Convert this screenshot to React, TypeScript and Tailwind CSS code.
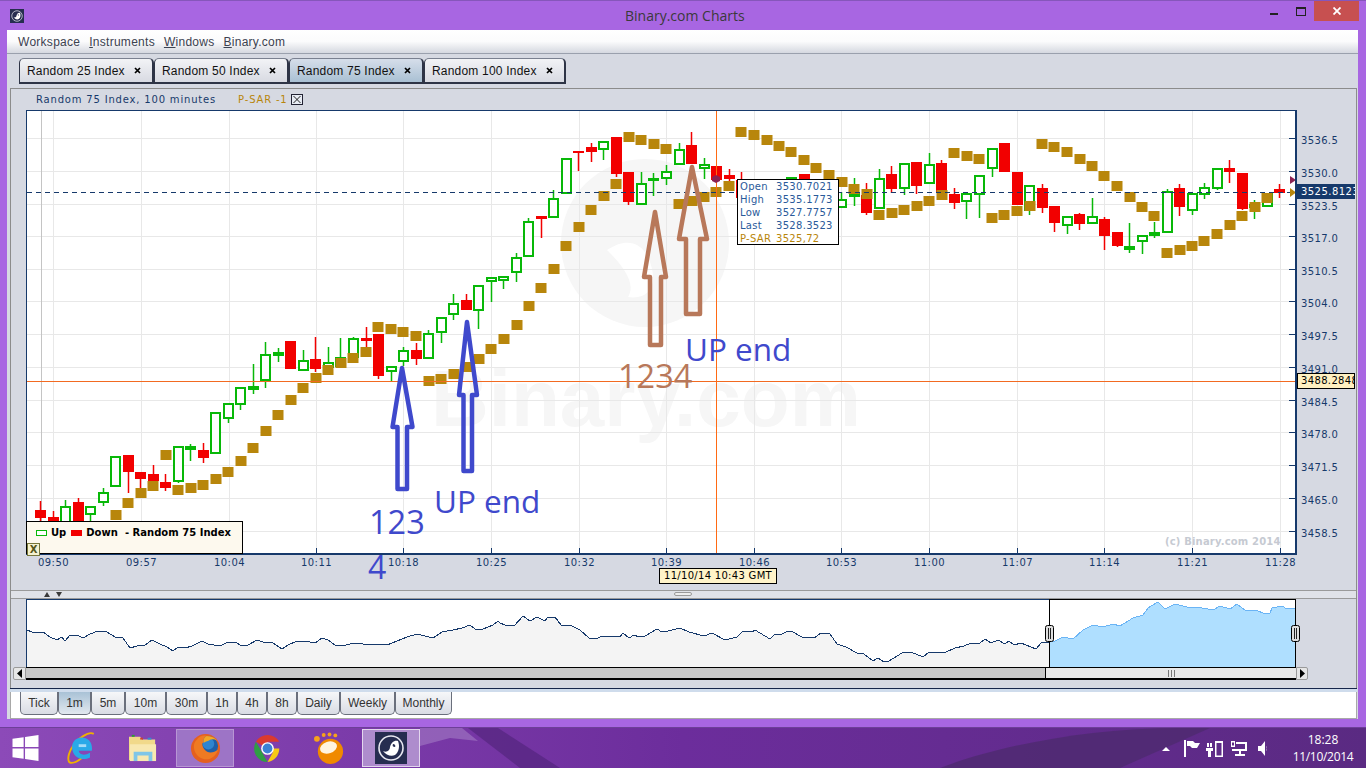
import React from 'react';

const sans = { fontFamily: '"Liberation Sans", Arial, sans-serif' };

// candle rows: type, body top, body bottom, wick top, wick bottom (page pixels)
type Candle = [string, number, number, number?, number?] | null;
const candles: Candle[] = [
  ['d', 510, 518, 501, 521], ['d', 517, 525, 511, 525], ['u', 506, 525, 500, 525], ['d', 502, 525, 498, 525],
  ['u', 506, 515, 506, 521], ['u', 492, 503, 488, 506], ['u', 456, 487], ['d', 455, 472, 455, 493],
  ['d', 472, 479, 472, 488], ['d', 474, 481, 465, 490], ['d', 482, 488, 474, 491], ['u', 446, 482, 446, 483],
  ['f', 446, 450, 444, 461], ['d', 450, 458, 443, 463], ['u', 412, 454], ['u', 403, 419, 403, 423],
  ['u', 387, 405, 387, 410], ['u', 386, 390, 364, 394], ['u', 354, 381, 342, 388], ['f', 352, 356, 348, 362],
  ['d', 341, 369], ['u', 360, 371, 350, 371], ['d', 359, 369, 337, 372], ['u', 362, 368, 347, 368],
  ['u', 357, 367, 338, 367], ['u', 338, 358, 337, 358], ['d', 338, 341, 327, 347], ['d', 334, 376, 334, 379],
  ['u', 366, 372, 366, 381], ['u', 350, 362, 347, 366], ['d', 350, 359, 343, 365], ['u', 333, 359, 330, 359],
  ['u', 317, 333, 317, 343], ['u', 303, 315, 294, 320], ['d', 300, 310, 294, 310], ['u', 285, 311, 285, 329],
  ['u', 277, 282, 277, 302], ['u', 276, 281, 276, 289], ['u', 257, 273, 253, 282], ['u', 221, 257, 218, 257],
  ['d', 216, 219, 216, 238], ['u', 198, 218, 190, 218], ['u', 158, 194], ['d', 151, 153, 151, 171],
  ['d', 147, 152, 143, 162], ['u', 141, 150, 141, 160], ['d', 137, 174, 137, 177], ['d', 172, 202, 172, 205],
  ['u', 183, 205, 172, 205], ['u', 178, 181, 173, 196], ['u', 171, 179, 165, 185], ['u', 149, 165, 143, 165],
  ['d', 145, 164, 132, 164], ['u', 164, 169, 158, 179], ['d', 166, 180], ['d', 175, 179, 169, 190],
  ['d', 180, 198, 172, 198], null, null, null, ['u', 177, 190], ['d', 174, 190], null, null,
  ['u', 199, 208, 192, 208], ['f', 193, 197, 178, 206], ['d', 195, 213, 183, 215], ['u', 178, 209, 169, 209],
  ['d', 174, 189, 166, 193], ['u', 163, 189, 163, 195], ['d', 162, 186, 162, 194], ['u', 164, 184, 153, 184],
  ['d', 163, 192, 160, 192], ['d', 194, 203, 188, 209], ['u', 193, 202, 193, 219], ['u', 175, 195, 175, 218],
  ['u', 148, 169, 148, 177], ['d', 143, 172], ['d', 172, 205], ['u', 185, 211, 185, 215],
  ['d', 188, 208, 184, 213], ['d', 206, 223, 206, 232], ['u', 216, 226, 216, 234], ['d', 214, 224, 213, 230],
  ['u', 216, 224, 198, 224], ['d', 219, 236, 217, 250], ['d', 232, 246, 232, 247], ['f', 246, 250, 223, 253],
  ['u', 235, 242, 235, 254], ['f', 232, 236, 222, 238], ['u', 191, 233, 189, 233], ['d', 188, 207, 184, 216],
  ['u', 193, 211, 193, 215], ['u', 187, 195, 183, 199], ['u', 168, 189, 168, 190], ['d', 168, 172, 160, 183],
  ['d', 173, 209, 173, 210], ['f', 204, 208, 200, 219], ['u', 193, 207], ['d', 189, 193, 184, 198],
];

const sar = [
  [116, 515], [128, 503], [141, 493], [153, 486], [166, 455], [178, 490], [191, 488], [203, 485], [216, 479], [228, 472],
  [241, 461], [253, 448], [266, 431], [278, 415], [291, 400], [303, 388], [316, 378], [328, 370], [341, 363], [353, 358],
  [366, 352], [378, 327], [391, 329], [403, 332], [416, 336], [429, 381], [441, 379], [454, 374], [467, 367], [479, 359],
  [491, 349], [504, 339], [517, 325], [529, 306], [541, 288], [554, 269], [566, 246], [579, 227], [591, 210], [604, 196],
  [616, 184], [629, 137], [641, 140], [654, 144], [666, 149], [679, 204], [692, 201], [704, 197], [716, 192], [729, 186],
  [741, 132], [754, 135], [767, 140], [779, 146], [791, 152], [804, 160], [816, 168], [829, 175], [842, 182], [854, 189],
  [867, 194], [879, 215], [892, 213], [904, 210], [917, 206], [929, 201], [942, 195], [954, 153], [967, 156], [979, 159],
  [992, 218], [1004, 215], [1017, 211], [1030, 206], [1042, 144], [1054, 147], [1067, 152], [1080, 159], [1092, 166],
  [1104, 176], [1117, 186], [1130, 197], [1142, 207], [1154, 216], [1167, 253], [1180, 250], [1192, 246], [1204, 241],
  [1217, 234], [1230, 225], [1242, 216], [1255, 207], [1267, 198],
];

const gridY = [138, 171, 204, 236, 269, 301, 334, 367, 400, 432, 465, 498, 531];
const priceLabels = ['3536.5', '3530.0', '3523.5', '3517.0', '3510.5', '3504.0', '3497.5', '3491.0', '3484.5', '3478.0', '3471.5', '3465.0', '3458.5'];
const times: [number, string][] = [
  [53, '09:50'], [141, '09:57'], [229, '10:04'], [316, '10:11'], [403, '10:18'], [491, '10:25'], [579, '10:32'], [666, '10:39'],
  [754, '10:46'], [841, '10:53'], [929, '11:00'], [1017, '11:07'], [1104, '11:14'], [1192, '11:21'], [1280, '11:28'],
];

const CandleMark = ({ c, i }: { c: NonNullable<Candle>; i: number }) => {
  const left = Math.round(40.5 + 12.52 * i - 5.5);
  const [type, top, bottom, wickTop = top, wickBottom = bottom] = c;
  const color = type === 'd' ? '#f20000' : '#08b808';
  return (
    <g>
      <rect x={left + 4.75} y={wickTop} width={1.5} height={wickBottom - wickTop} fill={color} />
      {type === 'u' ? (
        <rect x={left + 1} y={top + 1} width={9} height={bottom - top - 2} fill="#fff" stroke={color} strokeWidth={2} />
      ) : (
        <rect x={left} y={top} width={11} height={bottom - top} fill={color} />
      )}
    </g>
  );
};

const arrowPath = (tip: number[], headY: number, l: number, r: number, sl: number, sr: number, bottom: number) =>
  `M${tip[0]} ${tip[1]} L${r} ${headY} L${sr} ${headY} L${sr} ${bottom} L${sl} ${bottom} L${sl} ${headY} L${l} ${headY} Z`;

const ChartArea = () => (
  <svg viewBox="11 110 1345 480" className="block h-[480px] w-[1345px]" style={{ fontFamily: '"DejaVu Sans", sans-serif' }}>
    <rect x={26} y={110} width={1270} height={444} fill="#fff" />
    <circle cx={645} cy={243} r={84} fill="#f6f6f6" />
    <path d="M607 250C625 238 642 240 650 262C658 285 650 300 628 297C636 284 625 268 607 250Z" fill="#fff" />
    <text x={431} y={426} fontSize={80} fontWeight={700} fill="#f6f6f6" style={sans}>Binary.com</text>
    {gridY.map((y) => (
      <g key={y}>
        <rect x={27} y={y} width={1268} height={1} fill="#e8e8e8" />
        <rect x={1289} y={y} width={6} height={1} fill="#16396b" />
      </g>
    ))}
    {times.map(([x, t]) => (
      <g key={t}>
        <rect x={x} y={111} width={1} height={442} fill="#e8e8e8" />
        <rect x={x} y={548} width={1} height={5} fill="#16396b" />
        <text x={x + 0.5} y={566} textAnchor="middle" fontSize={10} letterSpacing={0.45} fill="#16396b">{t}</text>
      </g>
    ))}
    <rect x={41} y={111} width={1} height={442} fill="#c4c4c4" />
    <text x={1165} y={545} fontSize={10} fontWeight={700} letterSpacing={0.17} fill="#c6cad2">(c) Binary.com 2014</text>
    {candles.map((c, i) => c && <CandleMark key={i} c={c} i={i} />)}
    {sar.map(([x, y]) => (
      <rect key={x} x={x - 5.5} y={y - 5} width={11} height={10} fill="#b8860b" />
    ))}
    <line x1={27} x2={1295} y1={192.5} y2={192.5} stroke="#16396b" strokeWidth={1} strokeDasharray="5 4" />
    <rect x={27} y={381} width={1268} height={1} fill="#f26a21" />
    <rect x={716} y={111} width={1} height={442} fill="#ff6a13" />
    <polygon points="716,175 720,177 720,181 716,183 712,181 712,177" fill="#8b2252" />
    <polygon points="1290,176 1296,180 1290,184" fill="#8b2252" />
    <polygon points="1290,188 1296,192.5 1290,197" fill="#b8860b" />
    <rect x={26} y={110} width={1270} height={1} fill="#16396b" />
    <rect x={26} y={110} width={1} height={444} fill="#16396b" />
    <rect x={1295} y={110} width={2} height={445} fill="#16396b" />
    <rect x={26} y={553} width={1271} height={2} fill="#16396b" />
    {priceLabels.map((p, i) => (
      <text key={p} x={1301} y={gridY[i] + 6} fontSize={10} letterSpacing={0.35} fill="#16396b">{p}</text>
    ))}
    <path d={arrowPath([402, 368], 427, 392.5, 412.5, 397.5, 407, 489)} fill="none" stroke="#3f49cc" strokeWidth={4.5} strokeLinejoin="round" />
    <path d={arrowPath([467, 322], 395, 459, 477, 463.5, 472, 471)} fill="none" stroke="#3f49cc" strokeWidth={4.5} strokeLinejoin="round" />
    <path d={arrowPath([655, 212], 277, 644, 666, 650, 661, 345)} fill="none" stroke="#b8785a" strokeWidth={4.5} strokeLinejoin="round" />
    <path d={arrowPath([692, 167], 239, 679, 707, 686, 700, 314)} fill="none" stroke="#b8785a" strokeWidth={4.5} strokeLinejoin="round" />
  </svg>
);

const navLine = [
  [27, 630], [32, 632], [37, 633], [43, 632], [50, 637], [57, 640], [62, 637], [65, 641], [70, 635], [77, 635], [83, 638], [90, 634], [98, 631], [107, 632],
  [115, 637], [123, 638], [130, 648], [137, 646], [145, 645], [152, 640], [160, 644], [167, 647], [173, 651], [178, 647], [185, 648], [192, 646], [202, 641],
  [208, 644], [220, 646], [228, 642], [235, 642], [242, 646], [248, 645], [257, 640], [263, 642], [273, 643], [282, 649], [288, 645], [297, 641], [305, 641],
  [315, 643], [322, 638], [328, 640], [335, 645], [343, 646], [353, 643], [363, 644], [373, 644], [387, 645], [397, 641], [407, 637], [417, 634], [425, 636],
  [433, 638], [442, 632], [453, 630], [462, 628], [470, 625], [475, 629], [483, 629], [493, 625], [498, 621],
  [500, 623], [505, 625], [514, 626], [523, 616], [530, 621], [537, 617], [545, 621], [548, 617], [555, 617], [561, 625], [570, 625], [580, 630], [589, 638],
  [596, 639], [602, 636], [607, 637], [614, 636], [620, 637], [623, 633], [629, 638], [634, 635], [639, 637], [645, 636], [657, 629], [662, 632], [668, 631],
  [680, 628], [689, 632], [704, 636], [712, 633], [725, 640], [737, 637], [743, 631], [752, 632], [755, 630], [770, 639], [775, 634], [782, 634], [786, 632],
  [791, 631], [802, 637], [814, 638], [821, 633], [830, 634], [837, 644], [846, 647], [857, 653], [864, 654], [873, 661], [878, 658], [884, 662], [889, 661],
  [902, 653], [911, 652], [923, 657], [929, 652], [937, 652], [946, 652], [955, 648], [964, 646], [971, 643], [980, 643], [985, 639], [991, 643], [998, 640],
  [1005, 644], [1009, 641], [1014, 645], [1021, 643], [1036, 649], [1041, 643], [1049, 642],
];
const navBlue = [
  [1049, 641], [1055, 641], [1063, 637], [1073, 639], [1083, 630], [1093, 625], [1103, 627], [1113, 624], [1120, 626], [1133, 618], [1143, 615], [1148, 608],
  [1158, 602], [1165, 609], [1175, 604], [1187, 607], [1197, 607], [1213, 610], [1220, 606], [1230, 609], [1237, 604], [1245, 610], [1258, 611], [1263, 613],
  [1270, 613], [1272, 608], [1282, 606], [1287, 609], [1296, 608],
];
const toPoints = (pts: number[][]) => pts.map((p) => p.join(',')).join(' ');

const NavHandle = ({ x }: { x: number }) => (
  <g>
    <rect x={x - 4} y={625.5} width={8} height={16} rx={2} fill="#dedede" stroke="#000" />
    <path d={`M${x - 1} 628V639M${x + 1} 628V639`} stroke="#222" strokeWidth={1} />
  </g>
);

const Overview = () => (
  <svg viewBox="26 599 1270 68" className="block h-[68px] w-[1270px] overflow-visible">
    <rect x={26} y={599} width={1270} height={68} fill="#fff" />
    <polygon points={`27,667 ${toPoints(navLine)} 1049,667`} fill="#f4f4f4" />
    <polyline points={toPoints(navLine)} fill="none" stroke="#16396b" strokeWidth={1} shapeRendering="crispEdges" />
    <polygon points={`1049,667 ${toPoints(navBlue)} 1296,667`} fill="#afdfff" />
    <polyline points={toPoints(navBlue)} fill="none" stroke="#6ab4f5" strokeWidth={1} shapeRendering="crispEdges" />
    <rect x={26} y={599} width={1023} height={1} fill="#16396b" />
    <rect x={26} y={599} width={1} height={68} fill="#16396b" />
    <rect x={1049.5} y={599.5} width={246} height={68} fill="none" stroke="#000" />
    <NavHandle x={1049.5} />
    <NavHandle x={1295.5} />
  </svg>
);

const tabs = ['Random 25 Index', 'Random 50 Index', 'Random 75 Index', 'Random 100 Index'];
const ranges: [string, string][] = [
  ['Tick', 'w-[38px]'], ['1m', 'w-[33px]'], ['5m', 'w-[34px]'], ['10m', 'w-[41px]'], ['30m', 'w-[41px]'], ['1h', 'w-[30px]'],
  ['4h', 'w-[30px]'], ['8h', 'w-[30px]'], ['Daily', 'w-[43px]'], ['Weekly', 'w-[55px]'], ['Monthly', 'w-[57px]'],
];

const BinaryMark = ({ className }: { className: string }) => (
  <svg viewBox="0 0 32 32" className={className}>
    <rect width={32} height={32} fill="#262d50" />
    <circle cx={16} cy={16} r={12} fill="none" stroke="#e8e8f0" strokeWidth={1.6} />
    <path d="M8 19C12 21 15 18 15 15C16 11 19 8 23 9C25 14 24 20 20 23C16 25 11 23 8 19Z" fill="#fff" />
    <path d="M18 12C20 12 21 14 20 15C18 15 17 14 18 12Z" fill="#262d50" />
  </svg>
);

const Taskbar = () => (
  <div className="relative flex h-[41px] items-center overflow-hidden border-t border-[#6d3f98] bg-gradient-to-r from-[#8c4ab8] via-[#6c2d9c] to-[#5a2a82]">
    <svg viewBox="0 728 1366 40" className="absolute inset-0 h-full w-full">
      <path d="M420 728H462L478 741L450 738L420 746Z" fill="#a37cc4" opacity={0.6} />
      <path d="M468 728H498L560 768H520Z" fill="#4f2378" opacity={0.6} />
      <path d="M940 768C1000 745 1090 728 1180 728H1210L1120 768Z" fill="#4e2a6f" opacity={0.8} />
    </svg>
    <div className="relative flex h-full items-center">
      <div className="flex w-[50px] justify-center">
        <svg viewBox="0 0 28 28" className="h-[26px] w-[27px]" fill="#fff">
          <path d="M0 4L12 2.4V13H0ZM13.5 2.2L28 0V13H13.5ZM0 14.5H12V25.6L0 24ZM13.5 14.5H28V28L13.5 25.8Z" />
        </svg>
      </div>
      <div className="flex w-[62px] justify-center">
        <svg viewBox="0 0 32 34" className="h-[32px] w-[31px]">
          <path d="M29 2C24 -1 12 6 5 18C2 24 1 29 3 32C6 34 12 31 17 27" fill="none" stroke="#f0b000" strokeWidth={2} />
          <path d="M6 16C6 9 12 5 18 6C25 7 28 13 27 20H13C14 25 20 25 25 22V27C17 31 6 28 6 16Z" fill="#29a9e8" />
          <rect x={13} y={13} width={8} height={3} fill="#a4dcf8" />
        </svg>
      </div>
      <div className="flex w-[62px] justify-center">
        <svg viewBox="0 0 32 30" className="h-[28px] w-[32px]">
          <path d="M1 3H13L15 6H29V28H1Z" fill="#f1d98a" />
          <rect x={4} y={1} width={3} height={2} fill="#2ca02c" />
          <rect x={13} y={4} width={3} height={2} fill="#d04030" />
          <rect x={21} y={4} width={4} height={2} fill="#3090d0" />
          <path d="M2 11H30V29H2Z" fill="#f8e8b0" />
          <path d="M6 29V19H26V29H22V23H10V29Z" fill="#7fc6e8" />
        </svg>
      </div>
      <div className="ml-[2px] flex h-[38px] w-[58px] items-center justify-center border border-[#b896d4] bg-[#9d74c6]">
        <svg viewBox="0 0 32 32" className="h-[31px] w-[31px]">
          <circle cx={16} cy={16} r={15} fill="#e4601f" />
          <circle cx={18.500} cy={13.500} r={10.500} fill="#1f5fa8" />
          <circle cx={19} cy={11} r={6} fill="#2f85cf" />
          <path d="M7 7C10 3 14 2 17 3C14 5 13 8 15 10C12 9 12 13 15 17C18 21 24 21 29 17C27 24 21 28 15 27C8 26 4 20 4 14C4 11 5 9 7 7Z" fill="#ef7a22" />
          <path d="M17 3C22 3 26 5 28 8C25 6 22 6 19 8C17 9 15 9 15 10C13 8 14 5 17 3Z" fill="#f4a724" />
        </svg>
      </div>
      <div className="flex w-[66px] justify-center">
        <svg viewBox="0 0 32 32" className="h-[29px] w-[29px]">
          <path d="M16 16L3.2 8.5A15 15 0 0 1 29 8.5H16Z" fill="#db3a2f" />
          <path d="M16 16H29A15 15 0 0 1 16 31L22 20Z" fill="#f6c913" />
          <path d="M16 31A15 15 0 0 1 3.2 8.5L10 20Z" fill="#2f9e44" />
          <circle cx={16} cy={16} r={7} fill="#fff" />
          <circle cx={16} cy={16} r={5.4} fill="#3b82d6" />
        </svg>
      </div>
      <div className="flex w-[58px] justify-center">
        <svg viewBox="0 0 32 34" className="h-[33px] w-[31px]">
          <circle cx={17} cy={20} r={13} fill="#f08a00" />
          <ellipse cx={15} cy={16} rx={9} ry={6} fill="#fff4e0" transform="rotate(-18 15 16)" />
          <circle cx={3} cy={7} r={3} fill="#f7a21b" />
          <circle cx={10} cy={3} r={2} fill="#f7a21b" />
          <circle cx={16} cy={2.5} r={2} fill="#f7a21b" />
          <circle cx={22} cy={3.5} r={2} fill="#f7a21b" />
        </svg>
      </div>
      <div className="ml-[4px] flex h-[38px] w-[58px] items-center justify-center border border-[#e3d6ee] bg-[#ae8ccd]">
        <BinaryMark className="h-[32px] w-[32px]" />
      </div>
    </div>
    <div className="relative ml-auto flex h-full items-center text-white">
      <svg viewBox="0 0 110 20" className="mr-[23px] h-[20px] w-[110px]" fill="#fff">
        <polygon points="5,13 13,13 9,9" />
        <path d="M27 2H29V19H27ZM30 3H36L38 5H43L40 10H35L33 8H30Z" />
        <path d="M52 5V9H50V5ZM55 5V9H53V5ZM49 10H56V13H54V19H51V13H49ZM58 3H66V19H58ZM59.500 5V17.500H64.500V5Z" />
        <path d="M74 3H78V9H74ZM75 4.500V7.500H77V4.500ZM79 4H90V13H84V16H88V18H78V16H82V13H75V11H88V6H79Z" />
        <path d="M101 8H104L108 3V18L104 13H101ZM110 8C111.500 10 111.500 11 110 13L109.500 12C110 11 110 10 109.500 9Z" />
      </svg>
      <div className="w-[76px] pr-[10px] text-center text-[12px] leading-[17px]" style={{ fontFamily: '"Open Sans", sans-serif' }}>
        <p>18:28</p>
        <p className="tracking-[-0.3px]">11/10/2014</p>
      </div>
    </div>
  </div>
);

const Note = ({ className, children }: { className: string; children: React.ReactNode }) => (
  <span className={`absolute leading-none whitespace-nowrap ${className}`} style={{ fontFamily: '"Open Sans", sans-serif' }}>{children}</span>
);

const tipRows = [['Open', '3530.7021'], ['High', '3535.1773'], ['Low', '3527.7757'], ['Last', '3528.3523']];

export default function App() {
  return (
    <div className="relative flex h-[768px] w-[1366px] flex-col overflow-hidden bg-[#a866e2]" style={sans}>
      {/* title bar */}
      <div className="relative flex h-[30px] shrink-0 items-center border-t border-[#8656bb]">
        <BinaryMark className="ml-[10px] h-[14px] w-[14px]" />
        <span className="absolute left-[625px] top-[6px] text-[14px] leading-[18px] text-[#3a3a3a]" style={{ fontFamily: '"Open Sans", sans-serif' }}>Binary.com Charts</span>
        <div className="absolute right-[7px] top-0 flex items-start">
          <div className="mt-[12px] mr-[18px] h-[2px] w-[8px] bg-[#222]" />
          <div className="mt-[6px] mr-[8px] h-[9px] w-[10px] border border-t-[2px] border-[#222]" />
          <div className="flex h-[20px] w-[45px] items-center justify-center bg-[#c75050]">
            <svg viewBox="0 0 8 8" className="h-[8px] w-[8px]">
              <path d="M0.500 0.500L7.500 7.500M7.500 0.500L0.500 7.500" stroke="#fff" strokeWidth={1.8} />
            </svg>
          </div>
        </div>
      </div>

      {/* app window */}
      <div className="ml-[7px] flex h-[689px] w-[1351px] shrink-0 flex-col bg-[#d6d9e2]">
        <div className="flex h-[24px] shrink-0 items-center gap-[9px] border-b border-[#9aa0ad] bg-gradient-to-b from-white via-[#fbfbfc] to-[#d5d8e0] pl-[11px] text-[12px] tracking-[0.27px] text-[#3c4250]">
          <span>Workspace</span>
          <span><u>I</u>nstruments</span>
          <span><u>W</u>indows</span>
          <span><u>B</u>inary.com</span>
        </div>

        <div className="flex h-[34px] shrink-0 pl-[12px] pt-[4px]">
          {tabs.map((t) => (
            <div
              key={t}
              className={`flex h-[26px] items-center rounded-t-[5px] border border-b-2 border-r-2 border-[#2e3446] border-t-[#7a8090] pl-[7px] text-[12px] tracking-[0.2px] text-[#111] ${t === 'Random 100 Index' ? 'w-[142px]' : 'w-[135px]'} ${t === 'Random 75 Index' ? 'bg-gradient-to-b from-[#d6deea] to-[#a9c0d3]' : 'bg-gradient-to-b from-[#f2f3f6] to-[#d8dae2]'}`}
            >
              <span>{t}</span>
              <svg viewBox="0 0 7 7" className="ml-[9px] h-[7px] w-[7px]">
                <path d="M1 1L6 6M6 1L1 6" stroke="#000" strokeWidth={1.7} />
              </svg>
            </div>
          ))}
        </div>

        <div className="ml-[3px] flex h-[600px] w-[1347px] shrink-0 flex-col border-x border-t border-[#8c8c8c]" >
          <div className="flex h-[21px] shrink-0 items-center pl-[25px] text-[10px] tracking-[0.82px] text-[#16396b]" style={{ fontFamily: '"DejaVu Sans", sans-serif' }}>
            <span>Random 75 Index, 100 minutes</span>
            <span className="ml-[22px] text-[#b8860b]">P-SAR -1</span>
            <svg viewBox="0 0 12 11" className="ml-[3px] h-[11px] w-[12px]">
              <rect x={0.5} y={0.5} width={11} height={10} fill="#e8ecf4" stroke="#223" />
              <path d="M2.500 2L9.500 9M9.500 2L2.500 9" stroke="#222" strokeWidth={1} />
            </svg>
          </div>
          <ChartArea />
          <div className="relative h-[9px] shrink-0 border-y border-[#9a9a9a] bg-[#e0e2e8]">
            <svg viewBox="0 0 20 5" className="absolute left-[33px] top-[1px] h-[5px] w-[20px]" fill="#3a3a3a">
              <polygon points="0,5 6,5 3,0" />
              <polygon points="12,0 18,0 15,5" />
            </svg>
            <div className="absolute left-[663px] top-[1px] h-[4px] w-[18px] rounded-[2px] border border-[#9a9a9a] bg-[#eee]" />
          </div>
          <div className="ml-[15px] shrink-0"><Overview /></div>
          <div className="ml-[2px] flex h-[13px] shrink-0">
            <div className="flex w-[13px] items-center justify-center rounded-l-[2px] border border-[#9a9a9a] bg-[#e6e6e6]">
              <svg viewBox="0 0 5 9" className="h-[9px] w-[5px]"><polygon points="5,0 5,9 0,4.500" fill="#000" /></svg>
            </div>
            <div className="flex w-[1270px] border-y border-black border-b-2">
              <div className="w-[1019px] bg-[#c8c8c8]" />
              <div className="flex w-[251px] items-center justify-center border-l border-black bg-[#e8e8e8]">
                <svg viewBox="0 0 7 7" className="h-[7px] w-[7px]"><path d="M0.500 0V7M3.500 0V7M6.500 0V7" stroke="#777" /></svg>
              </div>
            </div>
            <div className="flex w-[12px] items-center justify-center rounded-r-[2px] border border-[#9a9a9a] bg-[#e6e6e6]">
              <svg viewBox="0 0 5 9" className="h-[9px] w-[5px]"><polygon points="0,0 0,9 5,4.500" fill="#000" /></svg>
            </div>
          </div>
        </div>

        <div className="ml-[3px] h-[31px] w-[1347px] shrink-0 border-t border-[#16264a] bg-[#cfdcec] pt-[3px]">
          <div className="flex h-[27px] items-start border-x border-b border-[#a8a8a8] bg-white pl-[9px]">
            {ranges.map(([r, w]) => (
              <div
                key={r}
                className={`flex h-[23px] items-center justify-center rounded-b-[5px] border border-t-0 border-[#6a6f7c] text-[12px] text-[#333] ${w} ${r === '1m' ? 'bg-gradient-to-b from-[#a9c2d6] to-[#e2e8ef] border-[#2e3446]' : 'bg-gradient-to-b from-[#f6f7f9] to-[#d9dce4]'}`}
              >
                {r}
              </div>
            ))}
          </div>
        </div>
      </div>

      <div className="h-[8px] shrink-0" />
      <Taskbar />

      {/* overlays: legend, tooltip, crosshair tags, hand-drawn notes */}
      <div className="absolute left-[26px] top-[521px] h-[33px] w-[217px] border border-black bg-[#fdf9ee] text-[10px] font-bold text-black" style={{ fontFamily: '"DejaVu Sans", sans-serif' }}>
        <div className="flex h-[21px] items-center pl-[9px]">
          <span className="h-[6px] w-[11px] border border-[#08b808] bg-white" />
          <span className="ml-[4px]">Up</span>
          <span className="ml-[5px] h-[6px] w-[11px] bg-[#f20000]" />
          <span className="ml-[4px] tracking-[0.02px] whitespace-pre">Down  - Random 75 Index</span>
        </div>
        <div className="flex h-[13px] w-[13px] items-center justify-center border border-[#77763a] bg-[#f5f2d0] text-[10px] text-[#55551a]">X</div>
      </div>

      <div className="absolute left-[737px] top-[179px] h-[66px] w-[102px] border border-black bg-white pl-[2px] text-[10px] leading-[13px] tracking-[0.3px] text-[#2a5a9a]" style={{ fontFamily: '"DejaVu Sans", sans-serif' }}>
        {tipRows.map(([k, v]) => (
          <div key={k} className="flex">
            <span className="w-[36px]">{k}</span>
            <span>{v}</span>
          </div>
        ))}
        <div className="flex text-[#b8860b]">
          <span className="w-[36px]">P-SAR</span>
          <span>3525,72</span>
        </div>
      </div>

      <div className="absolute left-[1296px] top-[184px] h-[15px] w-[59px] overflow-hidden bg-[#16396b] pl-[5px] text-[10px] leading-[15px] tracking-[0.45px] whitespace-nowrap text-white" style={{ fontFamily: '"DejaVu Sans", sans-serif' }}>3525.8123</div>
      <div className="absolute left-[1297px] top-[373px] h-[16px] w-[58px] overflow-hidden border border-black bg-[#fff0c0] pl-[3px] text-[10px] leading-[14px] tracking-[0.35px] whitespace-nowrap text-black" style={{ fontFamily: '"DejaVu Sans", sans-serif' }}>3488.2848</div>
      <div className="absolute left-[659px] top-[568px] h-[16px] w-[118px] border border-black bg-[#fff3c8] text-center text-[10px] leading-[14px] tracking-[0.3px] whitespace-nowrap text-black" style={{ fontFamily: '"DejaVu Sans", sans-serif' }}>11/10/14 10:43 GMT</div>

      <Note className="left-[685px] top-[333px] text-[31.5px] text-[#3f49cc]">UP end</Note>
      <Note className="left-[434px] top-[485px] text-[31.5px] text-[#3f49cc]">UP end</Note>
      <Note className="left-[618px] top-[360px] text-[32.5px] text-[#b8785a]">1234</Note>
      <Note className="left-[369px] top-[506px] text-[32.5px] text-[#3f49cc]">123</Note>
      <Note className="left-[368px] top-[551px] text-[32px] text-[#3f49cc]">4</Note>
    </div>
  );
}
